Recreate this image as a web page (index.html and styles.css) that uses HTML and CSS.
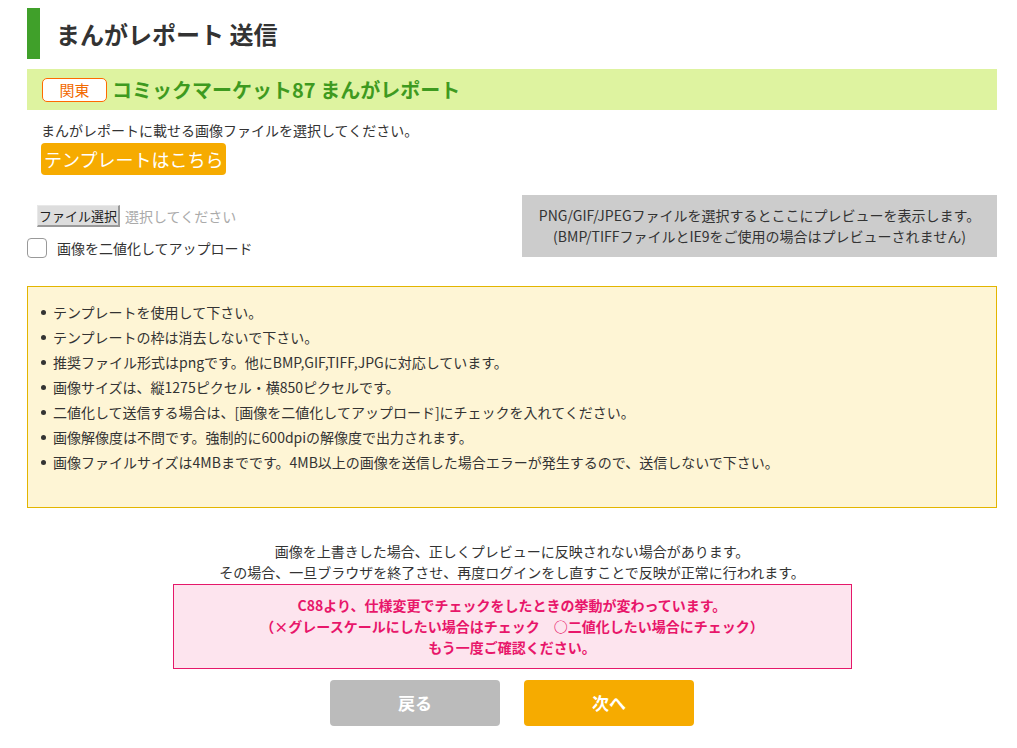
FILE: index.html
```html
<!DOCTYPE html>
<html lang="ja">
<head>
  <meta charset="UTF-8" />
  <title>まんがレポート 送信</title>
  <link rel="stylesheet" href="styles.css">
</head>
<body>
  <div class="page">
    <h1 class="page-title">まんがレポート 送信</h1>

    <div class="event-band">
      <span class="area-badge">関東</span>
      <span class="event-title">コミックマーケット87 まんがレポート</span>
    </div>

    <p class="intro">まんがレポートに載せる画像ファイルを選択してください。</p>
    <a href="#" class="template-btn">テンプレートはこちら</a>

    <div class="upload-row">
      <div class="upload-left">
        <div class="file-row">
          <button class="file-btn">ファイル選択</button>
          <span class="file-name">選択してください</span>
        </div>
        <label class="check-row">
          <span class="check-box"></span>
          <span>画像を二値化してアップロード</span>
        </label>
      </div>
      <div class="preview">
        PNG/GIF/JPEGファイルを選択するとここにプレビューを表示します。<br>
        (BMP/TIFFファイルとIE9をご使用の場合はプレビューされません)
      </div>
    </div>

    <div class="notice">
      <ul>
        <li>テンプレートを使用して下さい。</li>
        <li>テンプレートの枠は消去しないで下さい。</li>
        <li>推奨ファイル形式はpngです。他にBMP,GIF,TIFF,JPGに対応しています。</li>
        <li>画像サイズは、縦1275ピクセル・横850ピクセルです。</li>
        <li>二値化して送信する場合は、[画像を二値化してアップロード]にチェックを入れてください。</li>
        <li>画像解像度は不問です。強制的に600dpiの解像度で出力されます。</li>
        <li>画像ファイルサイズは4MBまでです。4MB以上の画像を送信した場合エラーが発生するので、送信しないで下さい。</li>
      </ul>
    </div>

    <p class="caution">
      画像を上書きした場合、正しくプレビューに反映されない場合があります。<br>
      その場合、一旦ブラウザを終了させ、再度ログインをし直すことで反映が正常に行われます。
    </p>

    <div class="alert">
      C88より、仕様変更でチェックをしたときの挙動が変わっています。<br>
      （×グレースケールにしたい場合はチェック　○二値化したい場合にチェック）<br>
      もう一度ご確認ください。
    </div>

    <div class="actions">
      <a href="#" class="btn btn-back">戻る</a>
      <a href="#" class="btn btn-next">次へ</a>
    </div>
  </div>
</body>
</html>
```

FILE: styles.css
```css
:root {
  --green: #40a02a;
  --orange: #f6ab00;
  --text: #333333;
}

body {
  margin: 0;
  font-family: "Noto Sans CJK JP", "Noto Sans", sans-serif;
  font-size: 14px;
  color: var(--text);
  background: #ffffff;
}

.page {
  width: 970px;
  padding: 8px 20px 0 27px;
}

.page-title {
  margin: 0;
  height: 51px;
  line-height: 51px;
  border-left: 13px solid var(--green);
  padding-left: 16px;
  font-size: 24px;
  font-weight: 700;
}

.event-band {
  margin-top: 10px;
  height: 41px;
  background: #def3a0;
  display: flex;
  align-items: center;
  padding-left: 15px;
  gap: 5px;
}

.area-badge {
  width: 63px;
  height: 22px;
  line-height: 22px;
  border: 1px solid #ff6a00;
  border-radius: 5px;
  background: #ffffff;
  color: #f26a00;
  text-align: center;
  font-size: 15px;
}

.event-title {
  color: #3e9a1f;
  font-size: 20px;
  font-weight: 700;
}

.intro {
  margin: 10px 0 0 14px;
  line-height: 21px;
}

.template-btn {
  display: inline-block;
  margin: 2px 0 0 14px;
  padding: 0 3px;
  height: 32px;
  line-height: 32px;
  background: var(--orange);
  color: #ffffff;
  font-size: 18px;
  text-decoration: none;
  border-radius: 4px;
}

.upload-row {
  margin-top: 20px;
  display: flex;
  justify-content: space-between;
}

.upload-left {
  padding-top: 10px;
}

.file-row {
  display: flex;
  align-items: center;
  gap: 5px;
  padding-left: 10px;
}

.file-btn {
  height: 22px;
  padding: 0 1px;
  font-family: inherit;
  font-size: 13px;
  color: #222;
  background: #dddddd;
  border: 1px solid #999;
  border-top-color: #e8e8e8;
  border-left-color: #e8e8e8;
  border-right-width: 2px;
  border-bottom-width: 2px;
}

.file-name {
  color: #aaaaaa;
}

.check-row {
  margin-top: 11px;
  display: flex;
  align-items: center;
  gap: 10px;
}

.check-box {
  width: 18px;
  height: 18px;
  border: 1px solid #999;
  border-radius: 4px;
  background: #ffffff;
}

.preview {
  width: 475px;
  height: 62px;
  box-sizing: border-box;
  padding-top: 10px;
  background: #cccccc;
  text-align: center;
  line-height: 21px;
}

.notice {
  margin-top: 28px;
  height: 222px;
  box-sizing: border-box;
  border: 1px solid #e3b500;
  background: #fef5d5;
}

.notice ul {
  margin: 0;
  padding: 13px 0 0 13px;
  list-style: none;
}

.notice li {
  display: flex;
  align-items: center;
  line-height: 25px;
}

.notice li::before {
  content: "";
  width: 5px;
  height: 5px;
  margin-right: 7px;
  border-radius: 50%;
  background: #333;
  flex-shrink: 0;
}

.caution {
  margin: 33px 0 0;
  text-align: center;
  line-height: 21px;
}

.alert {
  width: 677px;
  margin: 1px auto 0;
  padding: 10px 0;
  border: 1px solid #e5186a;
  background: #fde4ee;
  color: #e8166a;
  font-weight: 700;
  text-align: center;
  line-height: 21px;
}

.actions {
  margin-top: 11px;
  display: flex;
  justify-content: center;
  gap: 24px;
}

.btn {
  width: 170px;
  height: 46px;
  line-height: 46px;
  border-radius: 4px;
  color: #ffffff;
  font-size: 17px;
  font-weight: 700;
  text-align: center;
  text-decoration: none;
}

.btn-back {
  background: #bbbbbb;
}

.btn-next {
  background: var(--orange);
}
```
